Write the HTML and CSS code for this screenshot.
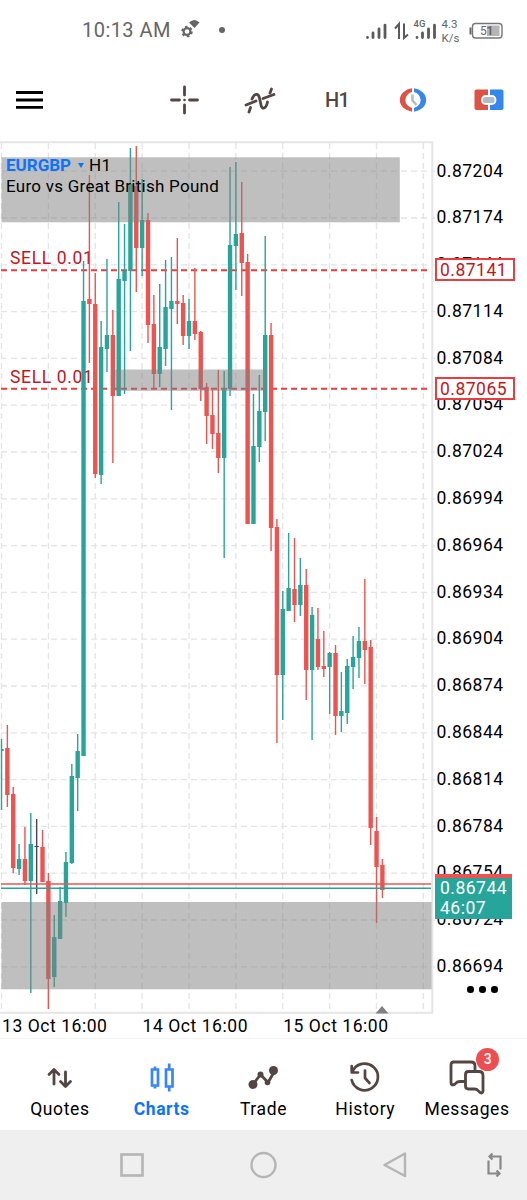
FILE: index.html
```html
<!DOCTYPE html>
<html lang="en">
<head>
  <meta charset="UTF-8">
  <meta name="viewport" content="width=device-width, initial-scale=1.0">
  <title>EURGBP H1</title>
  <link rel="stylesheet" href="styles.css">
</head>
<body>
  <div class="status-bar">
    <span class="clock">10:13 AM</span>
    <svg class="gear" width="20" height="20" viewBox="0 0 20 20">
      <circle cx="7" cy="12.500" r="3.400" fill="none" stroke="#666" stroke-width="2.200"/>
      <circle cx="7" cy="12.500" r="4.900" fill="none" stroke="#666" stroke-width="1.800" stroke-dasharray="2.600 2.530"/>
      <path d="M9 3.500Q14.500 -1.500 19.500 3.500L14.500 9Z" fill="#666"/>
    </svg>
    <span class="dot"></span>
    <svg class="signals" width="162" height="28" viewBox="0 0 162 28">
      <g stroke="#5a5a5a" stroke-width="2.800" stroke-linecap="round">
        <path d="M3.500 21.500v.1M9 17v4.500M15 13v8.500M21 9.200v12.300"/>
        <path d="M53 21.500v.1M58.500 17v4.500M64.500 13v8.500M70.500 9.200v12.300"/>
      </g>
      <path d="M35 23V8L31 12.500M40 7.500V22L44 18.500" fill="none" stroke="#5a5a5a" stroke-width="2"/>
      <text x="49.500" y="10.500" font-size="9.500" font-weight="500">4G</text>
      <text x="77.500" y="11.500" font-size="11.500">4.3</text>
      <text x="77.500" y="25.500" font-size="11.500">K/s</text>
      <rect x="108.500" y="7.500" width="29.500" height="14.500" rx="3" fill="#fff" stroke="#777" stroke-width="1.400"/>
      <rect x="123" y="9.500" width="12.500" height="10.500" fill="#b5b5b5"/>
      <path d="M106.500 11.500v7" stroke="#666" stroke-width="2"/>
      <text x="116" y="19" font-size="12">5</text>
      <text x="122.500" y="19" font-size="12" font-weight="700">1</text>
    </svg>
  </div>

  <div class="toolbar">
    <svg class="menu" width="28" height="20" viewBox="0 0 28 20"><path d="M0 2.500h27M0 10h27M0 17.300h27" stroke="#000" stroke-width="2.800"/></svg>
    <div class="tools">
      <svg width="30" height="30" viewBox="0 0 30 30">
        <path d="M15.500 2v8M15.500 20v8M2.500 15h8M20.500 15h8" stroke="#534642" stroke-width="2.800" stroke-linecap="round"/>
        <circle cx="15.500" cy="15" r="1.300" fill="#534642"/>
      </svg>
      <svg width="34" height="30" viewBox="0 0 34 30">
        <g fill="none" stroke="#534642" stroke-width="2.800" stroke-linecap="round">
          <path d="M3 20L13 16M20 13.500L31 9.500"/>
          <path d="M6 27L7.500 22.500M9 14C11.500 8 15.500 8 16.500 13L18 20C19 25 23 24 24.500 17M27 8L28.500 4"/>
        </g>
      </svg>
      <span class="timeframe">H1</span>
      <svg width="32" height="30" viewBox="0 0 32 30">
        <path d="M15 3.300A14 11.800 0 0 0 15 26.700V23A8.500 8.200 0 0 1 15 7Z" fill="#de5246"/>
        <path d="M17 3.300A14 11.800 0 0 1 17 26.700V23A8.500 8.200 0 0 0 17 7Z" fill="#3487ee"/>
        <path d="M15.500 9.500V15.500L19.500 20" fill="none" stroke="#b0bec5" stroke-width="2.600"/>
      </svg>
      <svg width="32" height="30" viewBox="0 0 32 30">
        <path d="M15 4.500H3.500Q1.500 4.500 1.500 6.500V23Q1.500 25 3.500 25H15Z" fill="#de5246"/>
        <path d="M17 4.500H28.500Q30.500 4.500 30.500 6.500V23Q30.500 25 28.500 25H17Z" fill="#3487ee"/>
        <rect x="9" y="11" width="13.500" height="8" rx="3.500" fill="#b0bec5" stroke="#fff" stroke-width="1.800"/>
      </svg>
    </div>
  </div>

  <div class="chart">
    <div class="plot">
      <svg id="candles" width="435" height="876" viewBox="0 140 435 876"></svg>
      <div class="symbol">
        <div class="pair"><b>EURGBP</b><i class="caret"></i>H1</div>
        <div>Euro vs Great British Pound</div>
      </div>
    </div>
    <div class="prices" id="prices">
      <div class="order-price first">0.87141</div>
      <div class="order-price second">0.87065</div>
      <div class="bid-price">0.86744<br>46:07</div>
      <div class="more"><i></i><i></i><i></i></div>
    </div>
  </div>
  <div class="dates">
    <span>13 Oct 16:00</span><span>14 Oct 16:00</span><span>15 Oct 16:00</span>
  </div>

  <div class="tabs">
    <div class="tab">
      <svg width="40" height="36" viewBox="0 0 40 36">
        <path d="M14 25V11M9 15.500L14 10.500L19 15.500M25.500 13V27M20.500 22.500L25.500 27.500L30.500 22.500" fill="none" stroke="#534642" stroke-width="2.800" stroke-linecap="round" stroke-linejoin="round"/>
      </svg>
      <span>Quotes</span>
    </div>
    <div class="tab active">
      <svg width="40" height="36" viewBox="0 0 40 36">
        <path d="M10 10.500h6v16h-6zM13 7.500v3M13 26.500v3M24 10.500h6.500v17H24zM27.200 4.500v6M27.200 27.500v5" fill="none" stroke="#3487fa" stroke-width="2.700"/>
      </svg>
      <span>Charts</span>
    </div>
    <div class="tab">
      <svg width="40" height="36" viewBox="0 0 40 36">
        <path d="M10 25.500L17.500 15.500L25 23.500L32 11.500" fill="none" stroke="#534642" stroke-width="2.800" stroke-linejoin="round"/>
        <g fill="#534642"><circle cx="10" cy="25.500" r="4.500"/><circle cx="17.500" cy="15.500" r="3"/><circle cx="24.500" cy="23.500" r="2.800"/><circle cx="30.500" cy="11.500" r="4.500"/></g>
      </svg>
      <span>Trade</span>
    </div>
    <div class="tab">
      <svg width="40" height="36" viewBox="0 0 40 36">
        <g fill="none" stroke="#534642" stroke-width="2.700" stroke-linecap="round" stroke-linejoin="round">
          <path d="M7.500 12.500A13.300 13.300 0 1 1 6.700 21M6.700 7V13.500H13"/>
          <path d="M20 11.500V19L24.500 24"/>
        </g>
      </svg>
      <span>History</span>
    </div>
    <div class="tab">
      <svg width="40" height="36" viewBox="0 0 40 36">
        <g fill="#fff" stroke="#534642" stroke-width="2.800" stroke-linejoin="round">
          <path d="M6.500 3H24Q28 3 28 7V22.500H12.500Q10 22.500 8 25Q4 27.500 4 23.500V6Q4 3 6.500 3Z"/>
          <path d="M21.500 12.500H32Q36 12.500 36 16.500V32.500Q35 35.500 32 32.500Q30 30 28 30H21.500Q18.500 30 18.500 27V15.500Q18.500 12.500 21.500 12.500Z"/>
        </g>
      </svg>
      <span>Messages</span>
      <em class="badge">3</em>
    </div>
  </div>

  <div class="nav-bar">
    <svg width="26" height="26" viewBox="0 0 26 26"><rect x="2.500" y="2.500" width="21" height="21" fill="none" stroke="#b5b5b5" stroke-width="2.600"/></svg>
    <svg width="28" height="28" viewBox="0 0 28 28"><circle cx="13.500" cy="14" r="12" fill="none" stroke="#b5b5b5" stroke-width="2.400"/></svg>
    <svg width="26" height="28" viewBox="0 0 26 28"><path d="M22 2.500V25L1.500 14Z" fill="none" stroke="#b5b5b5" stroke-width="2.400" stroke-linejoin="round"/></svg>
    <svg class="rotate" width="18" height="26" viewBox="0 0 18 26"><path d="M2.500 8.500V21.500H13M10.500 18.500L13.500 21.500L10.500 24.500M14.500 17.500V4.500H4M6.500 1.500L3.500 4.500L6.500 7.500" fill="none" stroke="#888" stroke-width="2.200"/></svg>
  </div>
  <script src="chart.js"></script>
</body>
</html>
```
FILE: styles.css
```css
* {
  box-sizing: border-box;
}

body {
  margin: 0;
  width: 527px;
  height: 1200px;
  background: #fff;
  font-family: Roboto, sans-serif;
  color: #000;
  overflow: hidden;
}

svg {
  display: block;
  flex: none;
}

.status-bar {
  height: 60px;
  display: flex;
  align-items: center;
  padding-left: 82px;
  color: #666;
}

.status-bar text {
  fill: #666;
}

.clock {
  width: 98px;
  font-size: 20px;
  letter-spacing: 0.45px;
  white-space: nowrap;
}

.gear {
  margin-top: -2px;
}

.dot {
  width: 6px;
  height: 6px;
  border-radius: 50%;
  background: #666;
  margin-left: 19px;
}

.signals {
  margin-left: 139px;
}

.toolbar {
  height: 79px;
  display: flex;
  align-items: center;
  justify-content: space-between;
  padding: 0 22px 0 16px;
}

.tools {
  display: flex;
  align-items: center;
  justify-content: space-between;
  width: 336px;
}

.timeframe {
  width: 32px;
  text-align: center;
  font-size: 20px;
  font-weight: 500;
  color: #534642;
  letter-spacing: -0.7px;
}

.chart {
  height: 876px;
  margin-top: 1px;
  display: flex;
}

.plot {
  position: relative;
  width: 435px;
}

.symbol {
  position: absolute;
  left: 6px;
  top: 15px;
  font-size: 17px;
  line-height: 21px;
  letter-spacing: 0.26px;
  white-space: nowrap;
}

.pair {
  display: flex;
  align-items: center;
}

.symbol b {
  color: #0a74ff;
  letter-spacing: 0;
}

.caret {
  border: 3px solid transparent;
  border-top: 5px solid #0a74ff;
  border-bottom: 0;
  margin: 0 5px 0 7px;
}

.sell {
  font-size: 17.5px;
  letter-spacing: 0.65px;
  fill: #c4161c;
}

.prices {
  position: relative;
  width: 92px;
  padding-top: 7.500px;
  font-size: 17.5px;
  letter-spacing: 0.5px;
}

.price {
  height: 46.800px;
  line-height: 46.800px;
  padding-left: 1.500px;
}

.order-price,
.bid-price {
  position: absolute;
  line-height: 20px;
}

.order-price {
  left: 0;
  width: 80px;
  height: 23px;
  padding-left: 3px;
  border: 2px solid #ee3b3b;
  background: #fff;
  color: #c4161c;
}

.first {
  top: 118px;
}

.second {
  top: 237px;
}

.bid-price {
  top: 734px;
  left: 0;
  width: 77px;
  height: 45px;
  padding-left: 5px;
  border-top: 4px solid #ef5350;
  background: #26a69a;
  color: #fff;
}

.more {
  position: absolute;
  left: 32px;
  top: 846px;
  display: flex;
  gap: 5.500px;
}

.more i {
  width: 6.500px;
  height: 6.500px;
  border-radius: 50%;
  background: #000;
}

.dates {
  height: 22px;
  display: flex;
  padding-left: 2px;
  font-size: 17.5px;
  line-height: 20px;
  letter-spacing: 0.55px;
}

.dates span {
  width: 140.600px;
}

.tabs {
  height: 92px;
  display: flex;
  padding: 0 8px 0 9px;
  border-top: 1px solid #f3f3f3;
}

.tab {
  position: relative;
  width: 101.800px;
  flex: none;
  display: flex;
  flex-direction: column;
  align-items: center;
  padding-top: 20px;
  font-size: 17.500px;
  letter-spacing: 0.6px;
}

.tab span {
  line-height: 20px;
  margin-top: 4px;
}

.tab.active {
  color: #0a74ff;
  font-weight: 700;
}

.badge {
  position: absolute;
  left: 60px;
  top: 9px;
  width: 23px;
  height: 23px;
  border-radius: 50%;
  background: #ef4e50;
  color: #fff;
  font-size: 14px;
  font-style: normal;
  font-weight: 500;
  line-height: 23px;
  text-align: center;
  letter-spacing: 0;
}

.nav-bar {
  height: 70px;
  display: flex;
  align-items: center;
  background: #efefef;
  padding-left: 119px;
  gap: 105px;
}

.rotate {
  margin-left: -28px;
}
```
FILE: chart.js
```js
const UP = '#26a69a';
const DOWN = '#ef5350';
const svg = document.getElementById('candles');

// high, body top, body bottom, low, direction
const candles = [
  [739, 749, 751, 810, 1], [725, 748, 795, 807, 0], [787, 794, 868, 873, 0], [844, 859, 869, 875, 1],
  [827, 859, 881, 885, 0], [813, 844, 881, 993, 1], [819, 846, 847, 894, 2], [830, 847, 882, 882, 0],
  [873, 881, 979, 1009, 0], [915, 937, 977, 987, 1], [887, 901, 939, 939, 1], [852, 862, 903, 917, 1],
  [764, 776, 863, 864, 1], [734, 751, 778, 811, 1], [261, 301, 756, 756, 1], [175, 299, 304, 363, 0],
  [273, 304, 474, 478, 0], [321, 347, 475, 484, 1], [259, 335, 349, 372, 1], [310, 335, 396, 463, 0],
  [202, 279, 396, 396, 1], [224, 271, 281, 394, 1], [148, 184, 271, 351, 1], [146, 186, 248, 292, 0],
  [179, 220, 248, 276, 1], [213, 220, 325, 343, 0], [295, 324, 374, 390, 0], [284, 347, 374, 387, 1],
  [260, 307, 349, 366, 1], [257, 301, 309, 410, 1], [238, 301, 304, 324, 0], [295, 303, 336, 345, 0],
  [299, 321, 336, 349, 1], [268, 321, 334, 340, 0], [331, 332, 389, 401, 0], [383, 387, 416, 444, 0],
  [390, 415, 434, 449, 0], [370, 433, 458, 473, 0], [371, 390, 458, 558, 1], [167, 245, 389, 396, 1],
  [162, 234, 246, 290, 1], [182, 233, 263, 296, 0], [254, 262, 524, 524, 0], [394, 446, 524, 524, 1],
  [375, 411, 447, 462, 1], [236, 335, 412, 441, 1], [323, 335, 528, 551, 0], [519, 527, 675, 743, 0],
  [591, 609, 675, 720, 1], [533, 588, 611, 611, 1], [538, 589, 605, 622, 0], [558, 585, 605, 616, 1],
  [569, 585, 670, 700, 0], [607, 615, 670, 740, 1], [608, 639, 667, 670, 0], [631, 666, 669, 677, 0],
  [652, 653, 667, 714, 1], [645, 653, 716, 735, 0], [672, 711, 716, 732, 1], [659, 666, 713, 724, 1],
  [636, 657, 667, 689, 1], [627, 641, 658, 678, 1], [579, 641, 650, 684, 0], [640, 647, 828, 845, 0],
  [817, 831, 867, 923, 0], [859, 865, 890, 898, 0]
];

let out = '';

// grid
for (let i = 0; i < 10; i++) {
  const x = 1.5 + i * 46.87;
  out += `<path d="M${x} 143V1011" stroke="#e4e4e4" stroke-width="1.3" stroke-dasharray="6 4"/>`;
}
for (let i = 0; i < 18; i++) {
  const y = 171.2 + i * 46.8;
  out += `<path d="M1 ${y}H435" stroke="#e4e4e4" stroke-width="1.3" stroke-dasharray="6 4"/>`;
}
out += '<path d="M0 142.300H432.300V1012.800H0" fill="none" stroke="#e5e5e5" stroke-width="2"/>';

// open positions
for (const y of [270.3, 388.8]) {
  out += `<text class="sell" x="10" y="${y - 6}">SELL 0.01</text>`;
  out += `<path d="M1 ${y}H429" stroke="#ee3b3b" stroke-width="2" stroke-dasharray="6 4"/>`;
}

candles.forEach(([high, top, bottom, low, dir], i) => {
  const x = 1.5 + i * 5.86;
  const color = [DOWN, UP, '#434651'][dir];
  const left = i === 0 ? x : x - 2.2;
  out += `<rect x="${x - 0.7}" y="${high}" width="1.4" height="${low - high}" fill="${color}"/>`;
  out += `<rect x="${left}" y="${top}" width="${x + 2.2 - left}" height="${bottom - top}" fill="${color}"/>`;
});

// ask and bid
out += `<path d="M1 884H431" stroke="${DOWN}" stroke-width="1.6"/>`;
out += `<path d="M1 888.300H431" stroke="${UP}" stroke-width="1.6"/>`;

// zones
out += '<g fill="#808080" fill-opacity="0.5">';
out += '<rect x="1.5" y="157.300" width="398.300" height="65"/>';
out += '<rect x="112.500" y="369.500" width="153" height="21.300"/>';
out += '<rect x="1.5" y="902" width="430" height="87.300"/></g>';
out += '<path d="M375.500 1013.500L382 1006L388.500 1013.500Z" fill="#808080"/>';
svg.innerHTML = out;

const prices = document.getElementById('prices');
const tag = prices.firstElementChild;
for (let i = 0; i < 18; i++) {
  const row = document.createElement('div');
  row.className = 'price';
  row.textContent = (0.87204 - i * 0.0003).toFixed(5);
  prices.insertBefore(row, tag);
}
```
